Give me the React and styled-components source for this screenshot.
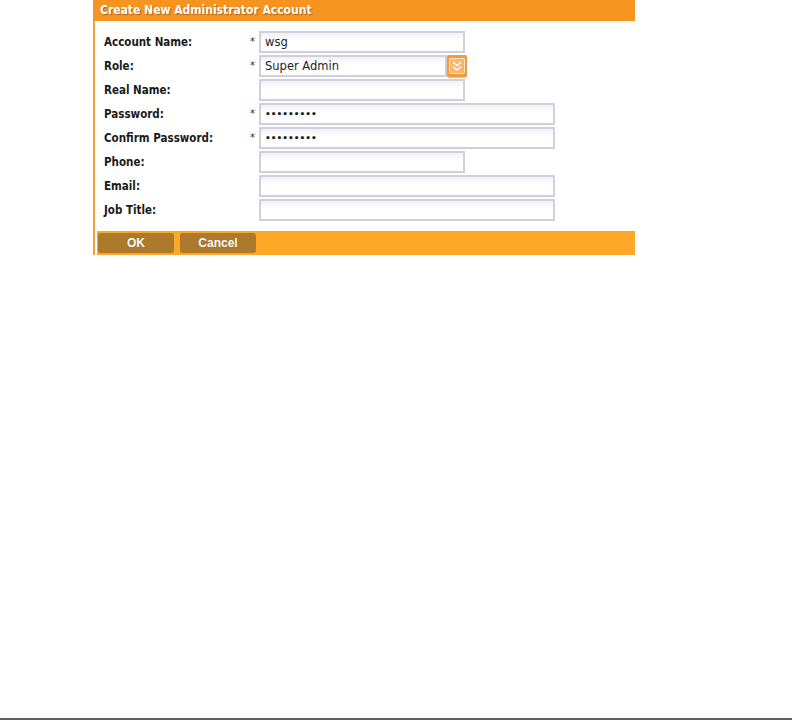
import React from 'react'
import styled, { createGlobalStyle } from 'styled-components'

const GlobalStyle = createGlobalStyle`
  html, body {
    margin: 0;
    padding: 0;
    background: #ffffff;
  }
  body {
    font-family: "DejaVu Sans", Tahoma, sans-serif;
  }
`

const fields = [
  { label: 'Account Name:', required: true, value: 'wsg', size: 'short' },
  { label: 'Role:', required: true, value: 'Super Admin', select: true },
  { label: 'Real Name:', value: '', size: 'short' },
  { label: 'Password:', required: true, value: '•••••••••', size: 'long', secret: true },
  { label: 'Confirm Password:', required: true, value: '•••••••••', size: 'long', secret: true },
  { label: 'Phone:', value: '', size: 'short' },
  { label: 'Email:', value: '', size: 'long' },
  { label: 'Job Title:', value: '', size: 'long' },
]

const ChevronIcon = () => (
  <svg width="16" height="16" viewBox="0 0 16 16">
    <rect x="0.5" y="0.5" width="15" height="15" rx="1" fill="#f9b470" stroke="#fde3c6" />
    <path d="M4 4 L8 7.5 L12 4" fill="none" stroke="#ffffff" strokeWidth="1.4" />
    <path d="M4 8.5 L8 12 L12 8.5" fill="none" stroke="#ffffff" strokeWidth="1.4" />
  </svg>
)

const App = () => (
  <Page>
    <GlobalStyle />
    <Dialog>
      <Header>Create New Administrator Account</Header>
      <Body>
        <Form>
          {fields.map((f) => (
            <React.Fragment key={f.label}>
              <Label>{f.label}</Label>
              <Star>{f.required ? '*' : ''}</Star>
              {f.select ? (
                <SelectWrap>
                  <Input size="select">{f.value}</Input>
                  <DropButton>
                    <ChevronIcon />
                  </DropButton>
                </SelectWrap>
              ) : (
                <Input size={f.size} $secret={f.secret}>{f.value}</Input>
              )}
            </React.Fragment>
          ))}
        </Form>
        <Footer>
          <Button>OK</Button>
          <Button>Cancel</Button>
        </Footer>
      </Body>
    </Dialog>
    <BottomRule />
  </Page>
)

export default App

const Page = styled.div`
  height: 720px;
  display: flex;
  flex-direction: column;
  box-sizing: border-box;
`

const Dialog = styled.div`
  margin-left: 93px;
  width: 542px;
`

const Header = styled.div`
  height: 21px;
  background: #f7931f;
  color: #ffffff;
  font-family: "DejaVu Sans Condensed", "DejaVu Sans", sans-serif;
  font-weight: bold;
  font-size: 12px;
  line-height: 20px;
  padding-left: 7px;
  text-shadow: 1px 1px 1px rgba(120, 60, 0, 0.55);
`

const Body = styled.div`
  border-left: 2px solid #f7a033;
  padding: 10px 0 0 2px;
`

const Form = styled.div`
  display: grid;
  grid-template-columns: 146px 9px 1fr;
  row-gap: 2px;
  align-items: center;
  padding-left: 7px;
`

const Label = styled.div`
  font-family: "DejaVu Sans Condensed", "DejaVu Sans", sans-serif;
  font-weight: bold;
  font-size: 11.5px;
  color: #1a1a1a;
`

const Star = styled.div`
  font-size: 10px;
  color: #333;
  align-self: start;
  padding-top: 5px;
`

const widths = { short: '206px', long: '296px', select: '188px' }

const Input = styled.div`
  box-sizing: border-box;
  width: ${(p) => widths[p.size] || '206px'};
  height: 22px;
  border: 2px solid #cfcfdd;
  background: linear-gradient(#f1f1f4, #ffffff 40%);
  font-family: "DejaVu Sans", Tahoma, sans-serif;
  font-size: ${(p) => (p.$secret ? '9px' : '11.5px')};
  font-weight: ${(p) => (p.$secret ? 'bold' : 'normal')};
  color: #222;
  line-height: 18px;
  padding-left: 4px;
`

const SelectWrap = styled.div`
  display: flex;
  align-items: flex-start;
`

const DropButton = styled.div`
  width: 20px;
  height: 22px;
  box-sizing: border-box;
  background: #f59a3c;
  border-radius: 2px;
  display: flex;
  align-items: center;
  justify-content: center;
  box-shadow: 0 1px 1px rgba(200, 100, 0, 0.4);
`

const Footer = styled.div`
  margin-top: 10px;
  height: 24px;
  background: #fda826;
  display: flex;
  align-items: center;
  gap: 6px;
  padding-left: 1px;
`

const Button = styled.div`
  width: 76px;
  height: 20px;
  box-sizing: border-box;
  background: #ad792a;
  border-radius: 3px;
  color: #ffffff;
  font-family: "Liberation Sans", Arial, sans-serif;
  font-weight: bold;
  font-size: 12px;
  line-height: 20px;
  text-align: center;
  text-shadow: 0 0 1px rgba(0, 0, 0, 0.3);
`

const BottomRule = styled.div`
  margin-top: auto;
  height: 2px;
  background: #5f5f5f;
`
